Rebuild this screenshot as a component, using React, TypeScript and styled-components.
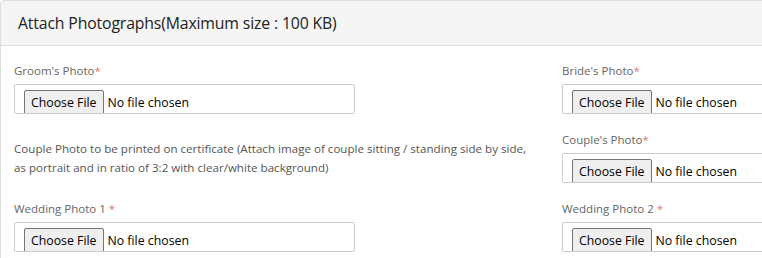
import React from "react";
import styled, { createGlobalStyle } from "styled-components";

const GlobalStyle = createGlobalStyle`
  html, body {
    margin: 0;
    padding: 0;
    background: #fff;
    font-family: "Open Sans", "Noto Sans", sans-serif;
  }
`;

const Card = styled.div`
  width: 900px;
  border: 1px solid #dddddd;
  border-radius: 4px 0 0 0;
  background: #fff;
  overflow: hidden;
`;

const CardHeader = styled.div`
  height: 44px;
  display: flex;
  align-items: center;
  padding: 0 17px;
  background: #f5f5f5;
  border-bottom: 1px solid #dddddd;
`;

const Title = styled.h3`
  margin: 0;
  font-size: 15.8px;
  font-weight: 500;
  color: #222;
  letter-spacing: -0.15px;
`;

const CardBody = styled.div`
  display: grid;
  grid-template-columns: 534px 340px;
  column-gap: 14px;
  row-gap: 17px;
  padding: 16px 13px 10px;
`;

const Field = styled.div`
  display: flex;
  flex-direction: column;
`;

const Label = styled.label`
  font-size: 11.5px;
  line-height: 17px;
  color: #666;
  margin-bottom: 5px;
  font-weight: 400;
`;

const Req = styled.span`
  color: #e07a7a;
`;

const Note = styled.p`
  margin: 0;
  max-width: 520px;
  padding-top: 8px;
  font-size: 11.6px;
  line-height: 19px;
  color: #555;
`;

const FileBox = styled.div<{ $width?: number }>`
  box-sizing: border-box;
  width: ${(p) => (p.$width ? `${p.$width}px` : "100%")};
  height: 30px;
  border: 1px solid #cccccc;
  border-radius: 2px;
  display: flex;
  align-items: flex-start;
  padding: 5px 0 0 9px;
  overflow: hidden;
`;

const FileButton = styled.span`
  box-sizing: border-box;
  height: 28px;
  padding: 3px 6px 0;
  border: 1px solid #767676;
  border-radius: 2px;
  background: #efefef;
  font-size: 12.3px;
  line-height: 18px;
  color: #000;
  white-space: nowrap;
`;

const FileText = styled.span`
  padding: 4px 0 0 4px;
  font-size: 12.3px;
  line-height: 18px;
  color: #000;
  white-space: nowrap;
`;

function FileField({ label, width }: { label: string; width?: number }) {
  return (
    <Field>
      <Label>
        {label}
        <Req>*</Req>
      </Label>
      <FileBox $width={width}>
        <FileButton>Choose File</FileButton>
        <FileText>No file chosen</FileText>
      </FileBox>
    </Field>
  );
}

export default function App() {
  return (
    <>
      <GlobalStyle />
      <Card>
        <CardHeader>
          <Title>Attach Photographs(Maximum size : 100 KB)</Title>
        </CardHeader>
        <CardBody>
          <FileField label="Groom's Photo" width={341} />
          <FileField label="Bride's Photo" />
          <Note>
            Couple Photo to be printed on certificate (Attach image of couple
            sitting / standing side by side, as portrait and in ratio of 3:2
            with clear/white background)
          </Note>
          <FileField label="Couple's Photo" />
          <FileField label="Wedding Photo 1 " width={341} />
          <FileField label="Wedding Photo 2 " />
        </CardBody>
      </Card>
    </>
  );
}
